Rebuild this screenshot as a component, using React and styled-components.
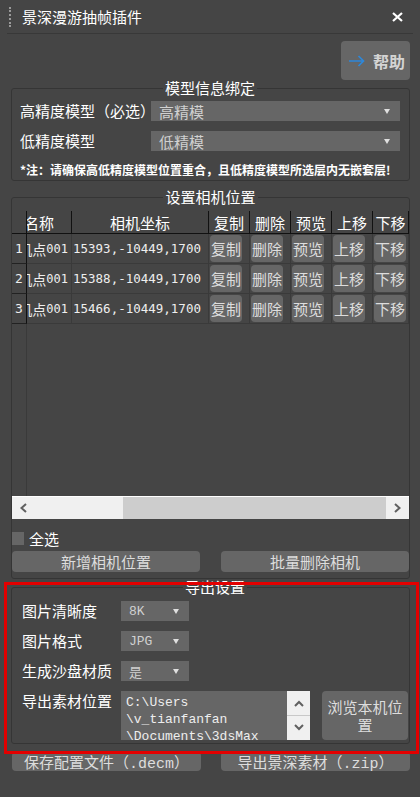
import React from 'react'
import styled, { createGlobalStyle } from 'styled-components'

const GlobalStyle = createGlobalStyle`
  html, body {
    margin: 0;
    background: #454545;
  }
  body {
    font-family: "Noto Sans CJK SC", "Noto Sans", sans-serif;
    color: #fff;
  }
  * { box-sizing: border-box; }
`

const cameras = [
  { id: 1, name: '相机点', num: '001', pos: '15393,-10449,1700' },
  { id: 2, name: '相机点', num: '001', pos: '15388,-10449,1700' },
  { id: 3, name: '相机点', num: '001', pos: '15466,-10449,1700' },
]

const actions = ['复制', '删除', '预览', '上移', '下移']

function Caret() {
  return <CaretMark />
}

function App() {
  return (
    <Window>
      <GlobalStyle />
      <TitleBar>
        <Grip />
        <Title>景深漫游抽帧插件</Title>
        <svg width="11" height="10" viewBox="0 0 11 10">
          <path d="M1 1 L10 9 M10 1 L1 9" stroke="#fff" strokeWidth="2.2" />
        </svg>
      </TitleBar>

      <HelpRow>
        <HelpButton>
          <svg width="17" height="12" viewBox="0 0 17 12">
            <path d="M1 6 H15.5 M10.5 1 L15.5 6 L10.5 11" stroke="#2e87d9" strokeWidth="1.7" fill="none" />
          </svg>
          帮助
        </HelpButton>
      </HelpRow>

      <Box $pt={5} $pb={2}>
        <Legend>模型信息绑定</Legend>
        <ModelRow>
          <Label>高精度模型（必选）</Label>
          <Select $pr={10}>高精模<Caret /></Select>
        </ModelRow>
        <ModelRow $mt={10}>
          <Label>低精度模型</Label>
          <Select $pr={10}>低精模<Caret /></Select>
        </ModelRow>
        <Note>*注：请确保高低精度模型位置重合，且低精度模型所选层内无嵌套层!</Note>
      </Box>

      <Box $mt={8} $pt={6} $pb={6} $px={0}>
        <Legend>设置相机位置</Legend>
        <TableView>
          <HeadRow>
            <HeadCell />
            <HeadCell $start><HeadText $shift={-3}>名称</HeadText></HeadCell>
            <HeadCell>相机坐标</HeadCell>
            {actions.map((a) => (
              <HeadCell key={a}>{a}</HeadCell>
            ))}
          </HeadRow>
          {cameras.map((c) => (
            <DataRow key={c.id}>
              <RowHead>{c.id}</RowHead>
              <NameCell>
                {c.name}
                <Digits>{c.num}</Digits>
              </NameCell>
              <CoordCell>{c.pos}</CoordCell>
              {actions.map((a) => (
                <BtnCell key={a}>
                  <CellButton>{a}</CellButton>
                </BtnCell>
              ))}
            </DataRow>
          ))}
          <Filler>
            <FillerHead />
          </Filler>
          <HScroll>
            <ScrollArrow>
              <svg width="9" height="10" viewBox="0 0 9 10">
                <path d="M7 1 L2.5 5 L7 9" stroke="#606060" strokeWidth="2" fill="none" />
              </svg>
            </ScrollArrow>
            <ScrollTrack>
              <Thumb />
            </ScrollTrack>
            <ScrollArrow>
              <svg width="9" height="10" viewBox="0 0 9 10">
                <path d="M2 1 L6.5 5 L2 9" stroke="#606060" strokeWidth="2" fill="none" />
              </svg>
            </ScrollArrow>
          </HScroll>
        </TableView>
        <CheckRow>
          <CheckBox />
          全选
        </CheckRow>
        <ButtonPair>
          <WideButton>新增相机位置</WideButton>
          <WideButton>批量删除相机</WideButton>
        </ButtonPair>
      </Box>

      <Box $pt={6} $pb={3} $pl={10} $pr={1}>
        <Legend>导出设置</Legend>
        <ExportRow>
          <Label>图片清晰度</Label>
          <Select $mono $pr={10}>8K<Caret /></Select>
        </ExportRow>
        <ExportRow $mt={10}>
          <Label>图片格式</Label>
          <Select $mono $pr={10}>JPG<Caret /></Select>
        </ExportRow>
        <ExportRow $mt={10}>
          <Label>生成沙盘材质</Label>
          <Select $mono $pr={10}>是<Caret /></Select>
        </ExportRow>
        <PathRow>
          <PathLabel>导出素材位置</PathLabel>
          <TextBox>
            <PathText>{'C:\\Users\n\\v_tianfanfan\n\\Documents\\3dsMax'}</PathText>
            <VScroll>
              <VArrow>
                <svg width="10" height="7" viewBox="0 0 10 7">
                  <path d="M1 6 L5 2 L9 6" stroke="#606060" strokeWidth="2" fill="none" />
                </svg>
              </VArrow>
              <VArrow $divider>
                <svg width="10" height="7" viewBox="0 0 10 7">
                  <path d="M1 1 L5 5 L9 1" stroke="#606060" strokeWidth="2" fill="none" />
                </svg>
              </VArrow>
            </VScroll>
          </TextBox>
          <BrowseButton>浏览本机位置</BrowseButton>
        </PathRow>
      </Box>

      <BottomPair>
        <BottomButton>保存配置文件（.decm）</BottomButton>
        <BottomButton>导出景深素材（.zip）</BottomButton>
      </BottomPair>

      <Highlight />
    </Window>
  )
}

const cols = '15px 45px 137px 41px 41px 41px 41px 1fr'

const Window = styled.div`
  position: relative;
  width: 420px;
  height: 797px;
  overflow: hidden;
  background: #454545;
`

const TitleBar = styled.div`
  display: flex;
  align-items: center;
  height: 34px;
  margin: 0 7px;
  padding: 0 10px 0 2px;
  border-bottom: 1px solid #383838;
`

const Grip = styled.div`
  width: 2px;
  height: 20px;
  border-left: 2px dotted #9a9a9a;
  margin-right: 11px;
`

const Title = styled.div`
  flex: 1;
  font-size: 15px;
  color: #fff;
`

const HelpRow = styled.div`
  display: flex;
  justify-content: flex-end;
  padding: 7px 10px 0;
`

const HelpButton = styled.div`
  display: flex;
  align-items: center;
  gap: 8px;
  width: 69px;
  height: 39px;
  padding-left: 7px;
  background: #666;
  border-radius: 4px;
  color: #d4d4d4;
  font-size: 16px;
  font-weight: bold;
`

const Box = styled.fieldset`
  min-width: 0;
  margin: ${(p) => p.$mt || 0}px 10px 0 11px;
  padding: ${(p) => p.$pt}px ${(p) => (p.$pr ?? p.$px ?? 9)}px ${(p) => p.$pb}px ${(p) => (p.$pl ?? p.$px ?? 8)}px;
  border: 1px solid #353535;
  border-radius: 3px;
`

const Legend = styled.legend`
  margin: 0 auto;
  padding: 0 2px;
  font-size: 15px;
  line-height: 16px;
  color: #fff;
`

const ModelRow = styled.div`
  display: grid;
  grid-template-columns: 131px 1fr;
  align-items: center;
  height: 20px;
  margin-top: ${(p) => p.$mt || 0}px;
`

const Label = styled.div`
  font-size: 15px;
  line-height: 18px;
  color: #fff;
  white-space: nowrap;
`

const Select = styled.div`
  display: flex;
  align-items: center;
  justify-content: space-between;
  height: 20px;
  padding: 0 ${(p) => p.$pr}px 0 8px;
  background: #666;
  color: #d0d0d0;
  font-family: ${(p) => (p.$mono ? '"Liberation Mono", "Noto Sans CJK SC", monospace' : 'inherit')};
  font-size: ${(p) => (p.$mono ? 13 : 15)}px;
`

const CaretMark = styled.span`
  width: 0;
  height: 0;
  border-left: 3.5px solid transparent;
  border-right: 3.5px solid transparent;
  border-top: 5px solid #e0e0e0;
`

const Note = styled.div`
  margin-top: 11px;
  font-size: 12px;
  line-height: 16px;
  font-weight: bold;
  color: #fff;
  white-space: nowrap;
`

const TableView = styled.div`
  display: flex;
  flex-direction: column;
  height: 308px;
`

const HeadRow = styled.div`
  display: grid;
  grid-template-columns: ${cols};
  height: 23px;
  border-bottom: 1px solid #111;
`

const HeadCell = styled.div`
  display: flex;
  align-items: center;
  justify-content: ${(p) => (p.$start ? 'flex-start' : 'center')};
  overflow: hidden;
  white-space: nowrap;
  border-right: 1px solid #111;
  font-size: 15px;
  color: #fff;
`

const HeadText = styled.span`
  margin-left: ${(p) => p.$shift}px;
`

const DataRow = styled.div`
  display: grid;
  grid-template-columns: ${cols};
  height: 30px;
  border-bottom: 1px solid #3a3a3a;
`

const RowHead = styled.div`
  display: flex;
  align-items: center;
  justify-content: center;
  border-right: 1px solid #111;
  border-bottom: 1px solid #222;
  margin-bottom: -1px;
  font-family: "DejaVu Sans Mono", monospace;
  font-size: 13px;
  color: #eee;
`

const NameCell = styled.div`
  display: flex;
  align-items: center;
  justify-content: flex-end;
  overflow: hidden;
  white-space: nowrap;
  padding-right: 3px;
  border-right: 1px solid #3a3a3a;
  font-size: 14px;
  color: #eee;
`

const Digits = styled.span`
  font-family: "DejaVu Sans Mono", monospace;
  font-size: 12px;
`

const CoordCell = styled.div`
  display: flex;
  align-items: center;
  overflow: hidden;
  white-space: nowrap;
  padding-left: 1px;
  border-right: 1px solid #3a3a3a;
  font-family: "DejaVu Sans Mono", monospace;
  font-size: 12.5px;
  color: #eee;
`

const BtnCell = styled.div`
  display: flex;
  align-items: center;
  padding-left: 1px;
  border-right: 1px solid #3a3a3a;
`

const CellButton = styled.div`
  display: flex;
  align-items: center;
  justify-content: center;
  width: 32px;
  height: 27px;
  background: #666;
  border-radius: 4px;
  font-size: 15px;
  color: #ddd;
`

const Filler = styled.div`
  flex: 1;
  display: flex;
`

const FillerHead = styled.div`
  width: 15px;
  border-right: 1px solid #3a3a3a;
`

const HScroll = styled.div`
  display: flex;
  height: 23px;
  background: #f0f0f0;
  border-top: 1px solid #fff;
`

const ScrollArrow = styled.div`
  display: flex;
  align-items: center;
  justify-content: center;
  width: 23px;
`

const ScrollTrack = styled.div`
  flex: 1;
  display: flex;
  padding-left: 88px;
`

const Thumb = styled.div`
  width: 263px;
  background: #cdcdcd;
`

const CheckRow = styled.div`
  display: flex;
  align-items: center;
  gap: 5px;
  height: 17px;
  margin-top: 11px;
  font-size: 15px;
  color: #fff;
`

const CheckBox = styled.div`
  width: 12px;
  height: 13px;
  background: #666;
`

const ButtonPair = styled.div`
  display: grid;
  grid-template-columns: 1fr 1fr;
  gap: 21px;
  margin-top: 4px;
`

const WideButton = styled.div`
  display: flex;
  align-items: center;
  justify-content: center;
  height: 21px;
  background: #666;
  border-radius: 4px;
  font-size: 15px;
  color: #ddd;
`

const ExportRow = styled.div`
  display: grid;
  grid-template-columns: 99px 68px;
  align-items: center;
  height: 20px;
  margin-top: ${(p) => p.$mt || 0}px;
`

const PathRow = styled.div`
  display: grid;
  grid-template-columns: 99px 189px 1fr;
  height: 49px;
  margin-top: 10px;
`

const PathLabel = styled(Label)`
  padding-top: 1px;
`

const TextBox = styled.div`
  display: flex;
  height: 49px;
  background: #666;
`

const PathText = styled.div`
  flex: 1;
  overflow: hidden;
  padding: 3px 0 0 5px;
  white-space: pre;
  font-family: "Liberation Mono", monospace;
  font-size: 13px;
  line-height: 17px;
  color: #eee;
`

const VScroll = styled.div`
  display: flex;
  flex-direction: column;
  width: 23px;
  background: #f0f0f0;
`

const VArrow = styled.div`
  display: flex;
  align-items: center;
  justify-content: center;
  height: 24px;
  border-top: ${(p) => (p.$divider ? '1px solid #c8c8c8' : 'none')};
`

const BrowseButton = styled.div`
  display: flex;
  align-items: center;
  justify-content: center;
  margin-left: 12px;
  padding: 0 5px;
  background: #666;
  border-radius: 4px;
  text-align: center;
  font-size: 15px;
  line-height: 18px;
  color: #ddd;
`

const BottomPair = styled.div`
  display: grid;
  grid-template-columns: 1fr 1fr;
  gap: 20px;
  margin: 8px 10px 0 12px;
`

const BottomButton = styled.div`
  display: flex;
  align-items: center;
  justify-content: center;
  height: 19px;
  background: #666;
  border-radius: 4px;
  white-space: nowrap;
  font-family: "Liberation Mono", "Noto Sans CJK SC", monospace;
  font-size: 15px;
  color: #ddd;
`

const Highlight = styled.div`
  position: absolute;
  left: 4px;
  top: 582px;
  width: 415px;
  height: 172px;
  border: 3px solid #e30000;
  pointer-events: none;
`

export default App
